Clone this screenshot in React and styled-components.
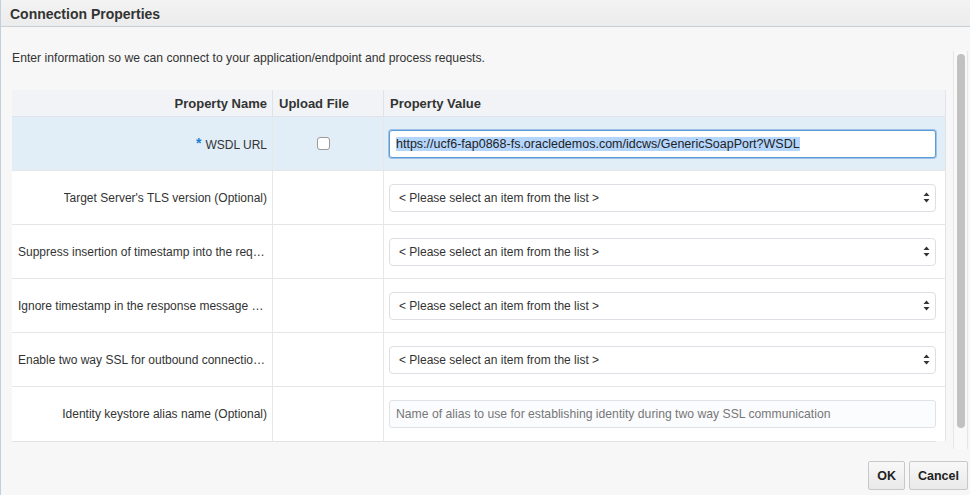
import styled, { createGlobalStyle } from "styled-components";

const GlobalStyle = createGlobalStyle`
  html, body {
    margin: 0;
    padding: 0;
    background: #f7f7f7;
    overflow: hidden;
  }
  body {
    font-family: "Liberation Sans", Arial, Helvetica, sans-serif;
    color: #333;
  }
`;

const PROPERTIES = [
  { id: "wsdl", label: "WSDL URL", required: true, upload: true, kind: "text", value: "https://ucf6-fap0868-fs.oracledemos.com/idcws/GenericSoapPort?WSDL" },
  { id: "tls", label: "Target Server's TLS version (Optional)", kind: "select" },
  { id: "suppress", label: "Suppress insertion of timestamp into the request message (Optional)", kind: "select" },
  { id: "ignore", label: "Ignore timestamp in the response message (Optional)", kind: "select" },
  { id: "twoway", label: "Enable two way SSL for outbound connections (Optional)", kind: "select" },
  { id: "alias", label: "Identity keystore alias name (Optional)", kind: "placeholder", placeholder: "Name of alias to use for establishing identity during two way SSL communication" }
];

export default function App() {
  return (
    <>
      <GlobalStyle />
      <Dialog>
        <TitleBar>Connection Properties</TitleBar>
        <Body>
          <Main>
            <Intro>Enter information so we can connect to your application/endpoint and process requests.</Intro>
            <Grid>
              <HeadCell $align="right">Property Name</HeadCell>
              <HeadCell>Upload File</HeadCell>
              <HeadCell $last>Property Value</HeadCell>
              {PROPERTIES.map((p) => (
                <PropertyRow key={p.id} property={p} />
              ))}
            </Grid>
          </Main>
          <ScrollTrack>
            <ScrollThumb />
          </ScrollTrack>
        </Body>
        <Footer>
          <Button>OK</Button>
          <Button>Cancel</Button>
        </Footer>
      </Dialog>
    </>
  );
}

function PropertyRow({ property }) {
  const selected = property.required;
  return (
    <>
      <Cell $selected={selected} $align="right">
        <Label title={property.label}>
          {property.required && <Star>*</Star>}
          {property.label}
        </Label>
      </Cell>
      <Cell $selected={selected} $center>
        {property.upload && <Checkbox />}
      </Cell>
      <Cell $selected={selected} $last $value>
        {property.kind === "text" && (
          <TextBox $focused>
            <Selected>{property.value}</Selected>
          </TextBox>
        )}
        {property.kind === "select" && (
          <SelectBox>
            <span>&lt; Please select an item from the list &gt;</span>
            <Arrows viewBox="0 0 7 11" width="7" height="11">
              <path d="M3.5 0.5 L6.5 4 L0.5 4 Z" fill="#333" />
              <path d="M0.5 7 L6.5 7 L3.5 10.5 Z" fill="#333" />
            </Arrows>
          </SelectBox>
        )}
        {property.kind === "placeholder" && (
          <TextBox $muted>
            <Placeholder>{property.placeholder}</Placeholder>
          </TextBox>
        )}
      </Cell>
    </>
  );
}

const Dialog = styled.div`
  height: 495px;
  display: flex;
  flex-direction: column;
  border-left: 1px solid #c3d0dc;
  box-sizing: border-box;
`;

const TitleBar = styled.div`
  height: 27px;
  flex: none;
  box-sizing: border-box;
  padding: 6px 0 0 9px;
  font-size: 14px;
  font-weight: bold;
  color: #333;
  background: linear-gradient(#f3f3f3, #ececec);
  border-bottom: 1px solid #c8d0d7;
`;

const Body = styled.div`
  flex: none;
  height: 422px;
  display: flex;
`;

const Main = styled.div`
  flex: none;
  width: 935px;
  padding: 24px 0 0 11px;
  box-sizing: border-box;
`;

const Intro = styled.div`
  font-size: 12.2px;
  line-height: 14px;
  color: #333;
  margin-bottom: 25px;
`;

const Grid = styled.div`
  display: grid;
  grid-template-columns: 261px 111px 562px;
  grid-template-rows: 27px repeat(6, 54px);
  border-bottom: 1px solid #e3e3e3;
`;

const HeadCell = styled.div`
  background: #f1f3f6;
  border-bottom: 1px solid #dfe4ea;
  border-right: ${(p) => (p.$last ? "1px solid #dfe4ea" : "1px solid #e0e3e6")};
  font-size: 13px;
  font-weight: bold;
  color: #333;
  display: flex;
  align-items: center;
  justify-content: ${(p) => (p.$align === "right" ? "flex-end" : "flex-start")};
  padding: 0 5px 0 6px;
  box-sizing: border-box;
`;

const Cell = styled.div`
  background: ${(p) => (p.$selected ? "#e1eef8" : "#fff")};
  border-bottom: 1px solid #e6e6e6;
  border-right: 1px solid ${(p) => (p.$last ? "#e3e3e3" : "#e8e8e8")};
  box-sizing: border-box;
  display: flex;
  align-items: center;
  justify-content: ${(p) =>
    p.$center ? "center" : p.$align === "right" ? "flex-end" : "flex-start"};
  padding: ${(p) => (p.$value ? "0 9px 0 5px" : p.$center ? "0 10px 0 0" : "0 5px 0 6px")};
  min-width: 0;
  &:nth-last-child(-n + 3) {
    border-bottom: none;
  }
`;

const Label = styled.div`
  font-size: 12px;
  color: #333;
  white-space: nowrap;
  overflow: hidden;
  text-overflow: ellipsis;
  text-align: right;
`;

const Star = styled.span`
  color: #1d7fd1;
  font-weight: bold;
  font-size: 14px;
  margin-right: 4px;
  vertical-align: 1px;
`;

const Checkbox = styled.span`
  display: inline-block;
  width: 11px;
  height: 11px;
  border: 1px solid #9a9a9a;
  border-radius: 3px;
  background: #fff;
  margin-top: -1px;
`;

const TextBox = styled.div`
  width: 100%;
  height: 28px;
  box-sizing: border-box;
  display: flex;
  align-items: center;
  padding: 0 6px;
  font-size: ${(p) => (p.$focused ? "12.5px" : "12.2px")};
  background: ${(p) => (p.$muted ? "#fbfcfe" : "#fff")};
  border: 1px solid ${(p) => (p.$focused ? "#5b9bd5" : "#dfe3e8")};
  border-radius: 3px;
  box-shadow: ${(p) => (p.$focused ? "0 0 0 1px #9cc3e8" : "none")};
  white-space: nowrap;
  overflow: hidden;
`;

const Selected = styled.span`
  background: #b4d5fc;
  color: #222;
`;

const Placeholder = styled.span`
  color: #777;
`;

const SelectBox = styled.div`
  width: 100%;
  height: 28px;
  box-sizing: border-box;
  display: flex;
  align-items: center;
  justify-content: space-between;
  padding: 0 4px 0 9px;
  font-size: 12px;
  color: #333;
  background: #fff;
  border: 1px solid #dcdfe3;
  border-radius: 4px;
`;

const Arrows = styled.svg`
  display: block;
  margin-right: 1px;
`;

const ScrollTrack = styled.div`
  flex: none;
  width: 15px;
  margin: 24px 0 0 17px;
  height: 398px;
  box-sizing: border-box;
  border-left: 1px solid #e6e6e6;
  border-right: 1px solid #e6e6e6;
  background: #f9f9f9;
  display: flex;
  justify-content: center;
  padding-top: 3px;
`;

const ScrollThumb = styled.div`
  width: 8px;
  height: 374px;
  border-radius: 4px;
  background: #c1c1c1;
`;

const Footer = styled.div`
  flex: 1;
  display: flex;
  justify-content: flex-end;
  align-items: flex-start;
  gap: 4px;
  padding: 12px 2px 0 0;
`;

const Button = styled.button`
  height: 29px;
  padding: 0 8px;
  min-width: 36px;
  font-family: "Liberation Sans", Arial, sans-serif;
  font-size: 12.5px;
  font-weight: bold;
  color: #222;
  background: linear-gradient(#f8f8f8, #e9e9e9);
  border: 1px solid #c6c9cc;
  border-radius: 2px;
`;
